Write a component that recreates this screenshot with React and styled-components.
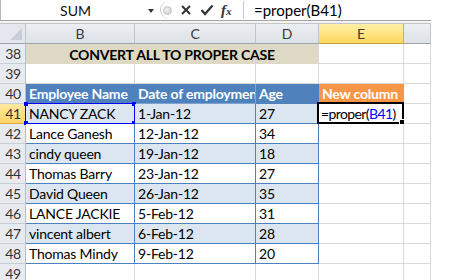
import React from 'react';
import styled, { createGlobalStyle } from 'styled-components';

const GlobalStyle = createGlobalStyle`
  html, body {
    margin: 0;
    padding: 0;
    background: #ffffff;
  }
  body {
    font-family: 'Lato', 'Liberation Sans', sans-serif;
  }
`;

const BLUE = '#4f81bd';
const GRID = '#d9d9d9';

const rows = [
  { name: 'NANCY ZACK', date: '1-Jan-12', age: '27' },
  { name: 'Lance Ganesh', date: '12-Jan-12', age: '34' },
  { name: 'cindy queen', date: '19-Jan-12', age: '18' },
  { name: 'Thomas Barry', date: '23-Jan-12', age: '27' },
  { name: 'David Queen', date: '26-Jan-12', age: '35' },
  { name: 'LANCE JACKIE', date: '5-Feb-12', age: '31' },
  { name: 'vincent albert', date: '6-Feb-12', age: '28' },
  { name: 'Thomas Mindy', date: '9-Feb-12', age: '20' },
];

const App = () => {
  return (
    <>
      <GlobalStyle />
      <Sheet>
        <FormulaBar>
          <NameBox>
            <span>SUM</span>
            <Caret />
          </NameBox>
          <Buttons>
            <Grip />
            <svg width="12" height="12" viewBox="0 0 12 12">
              <path d="M2 2 L10 10 M10 2 L2 10" stroke="#333" strokeWidth="2" />
            </svg>
            <svg width="14" height="12" viewBox="0 0 14 12">
              <path d="M1.5 6 L5 10 L12.5 1.5" stroke="#333" strokeWidth="2.2" fill="none" />
            </svg>
            <Fx>
              f<small>x</small>
            </Fx>
          </Buttons>
          <Formula>=proper(B41)</Formula>
        </FormulaBar>
        <Splitter />
        <Grid>
          <Corner>
            <svg width="12" height="12" viewBox="0 0 12 12">
              <path d="M12 0 L12 12 L0 12 Z" fill="#c9ced6" />
            </svg>
          </Corner>
          <ColHead>B</ColHead>
          <ColHead>C</ColHead>
          <ColHead>D</ColHead>
          <ColHead $active>E</ColHead>
          <ColHead />

          <RowHead>38</RowHead>
          <Title>CONVERT ALL TO PROPER CASE</Title>
          <Cell />
          <Cell />

          <RowHead>39</RowHead>
          <Cell />
          <Cell />
          <Cell />
          <Cell />
          <Cell />

          <RowHead>40</RowHead>
          <Cell $fill={BLUE} $line={BLUE} $bold $color="#ffffff">Employee Name</Cell>
          <Cell $fill={BLUE} $line="#7fa3cf" $bold $color="#ffffff">Date of employment</Cell>
          <Cell $fill={BLUE} $line={BLUE} $bold $color="#ffffff">Age</Cell>
          <Cell $fill="#f79646" $line="#f79646" $bold $color="#ffffff">New column</Cell>
          <Cell />

          {rows.map((r, i) => {
            const n = 41 + i;
            const fill = i % 2 === 0 ? '#dce6f1' : '#ffffff';
            return (
              <React.Fragment key={n}>
                <RowHead $active={n === 41}>{n}</RowHead>
                <Cell $fill={fill} $line={BLUE} $over={n === 41}>
                  {r.name}
                  {n === 41 && (
                    <RefBox>
                      <Knob $top $left />
                      <Knob $top />
                      <Knob $left />
                      <Knob />
                    </RefBox>
                  )}
                </Cell>
                <Cell $fill={fill} $line={BLUE}>{r.date}</Cell>
                <Cell $fill={fill} $line={BLUE}>{r.age}</Cell>
                {n === 41 ? (
                  <Cell $over $tight>
                    =proper(<Ref>B41</Ref>)
                    <ActiveBox>
                      <FillHandle />
                    </ActiveBox>
                  </Cell>
                ) : (
                  <Cell />
                )}
                <Cell />
              </React.Fragment>
            );
          })}

          <RowHead>49</RowHead>
          <Cell />
          <Cell />
          <Cell />
          <Cell />
          <Cell />
        </Grid>
      </Sheet>
    </>
  );
};

export default App;

const Sheet = styled.div`
  width: 431px;
  height: 280px;
  overflow: hidden;
  background: #ffffff;
`;

const FormulaBar = styled.div`
  height: 20px;
  display: flex;
  align-items: center;
  border-left: 1px solid #b5b5b5;
  border-bottom: 1px solid #a5a5a5;
`;

const NameBox = styled.div`
  width: 159px;
  display: flex;
  align-items: center;
  font-family: 'Lato', 'Liberation Sans', sans-serif;
  font-size: 14px;
  color: #111;

  span {
    flex: 1;
    text-align: center;
    padding-left: 2px;
  }
`;

const Caret = styled.div`
  width: 0;
  height: 0;
  margin: 2px 6px 0 0;
  border-left: 3px solid transparent;
  border-right: 3px solid transparent;
  border-top: 4px solid #333;
`;

const Buttons = styled.div`
  width: 84px;
  height: 18px;
  display: flex;
  align-items: center;
  gap: 8px;
  border-left: 1px solid #c8c8c8;
  border-radius: 9px 0 0 9px;
  border-right: 1px solid #c8c8c8;
  box-sizing: border-box;
`;

const Grip = styled.div`
  width: 7px;
  height: 7px;
  margin-left: 2px;
  border-radius: 50%;
  background: radial-gradient(circle at 40% 40%, #f2f2f2, #c2c2c2);
  border: 1px solid #c6c6c6;
`;

const Fx = styled.span`
  font-family: 'Liberation Serif', serif;
  font-style: italic;
  font-weight: bold;
  font-size: 15px;
  color: #333;
  margin-left: -1px;

  small {
    font-size: 11px;
  }
`;

const Formula = styled.div`
  margin-left: 10px;
  font-family: 'Lato', 'Liberation Sans', sans-serif;
  font-size: 15px;
  color: #000;
`;

const Splitter = styled.div`
  height: 2px;
  background: #f4f4f4;
  border-bottom: 1px solid #c4c4c4;
`;

const Grid = styled.div`
  display: grid;
  grid-template-columns: 26px 109px 121px 63px 85px 27px;
  grid-auto-rows: 20px;
  font-family: 'Lato', 'Liberation Sans', sans-serif;
  font-size: 14px;
  letter-spacing: -0.2px;
`;

const Corner = styled.div`
  display: flex;
  align-items: flex-end;
  justify-content: flex-end;
  padding: 0 3px 3px 0;
  background: #e4e8ee;
  border-right: 1px solid #c0c5cc;
  border-bottom: 1px solid #9ea4ac;
`;

const ColHead = styled.div`
  display: flex;
  align-items: center;
  justify-content: center;
  color: #3a3a3a;
  background: ${(p) =>
    p.$active ? 'linear-gradient(#fff0a8, #ffd85e)' : 'linear-gradient(#eceff3, #dde2e8)'};
  border-right: 1px solid ${(p) => (p.$active ? '#e1a94a' : '#c0c5cc')};
  border-bottom: 1px solid ${(p) => (p.$active ? '#c99a4a' : '#9ea4ac')};
`;

const RowHead = styled.div`
  display: flex;
  align-items: flex-end;
  justify-content: flex-end;
  padding: 0 4px 1px 0;
  color: #333;
  background: ${(p) => (p.$active ? 'linear-gradient(#ffe9a0, #ffd569)' : '#e7ebf0')};
  border-right: 1px solid ${(p) => (p.$active ? '#e1a94a' : '#b8bec6')};
  border-bottom: 1px solid ${(p) => (p.$active ? '#e1a94a' : '#c9ced5')};
`;

const Cell = styled.div`
  position: relative;
  display: flex;
  align-items: flex-end;
  padding: 0 0 1px ${(p) => (p.$tight ? '2px' : '3px')};
  white-space: nowrap;
  letter-spacing: ${(p) => (p.$tight ? '-0.6px' : 'inherit')};
  overflow: ${(p) => (p.$over ? 'visible' : 'hidden')};
  color: ${(p) => p.$color || '#000'};
  font-weight: ${(p) => (p.$bold ? 700 : 400)};
  background: ${(p) => p.$fill || '#ffffff'};
  border-right: 1px solid ${(p) => p.$line || GRID};
  border-bottom: 1px solid ${(p) => p.$line || GRID};
  min-width: 0;
`;

const Title = styled.div`
  grid-column: span 3;
  display: flex;
  align-items: flex-end;
  justify-content: center;
  padding-bottom: 1px;
  font-weight: 700;
  color: #000;
  background: #ddd9c4;
  border-right: 1px solid ${GRID};
`;

const RefBox = styled.div`
  position: absolute;
  left: -1px;
  top: -1px;
  right: -1px;
  bottom: -1px;
  border: 1px solid #0000ff;
`;

const Knob = styled.div`
  position: absolute;
  width: 4px;
  height: 4px;
  background: #0000ff;
  ${(p) => (p.$top ? 'top: -2px;' : 'bottom: -2px;')}
  ${(p) => (p.$left ? 'left: -2px;' : 'right: -2px;')}
`;

const Ref = styled.span`
  color: #0000ff;
`;

const ActiveBox = styled.div`
  position: absolute;
  left: -2px;
  top: -2px;
  right: -1px;
  bottom: -1px;
  border: 2px solid #000;
`;

const FillHandle = styled.div`
  position: absolute;
  right: -4px;
  bottom: -4px;
  width: 5px;
  height: 5px;
  background: #000;
  border: 1px solid #fff;
`;
